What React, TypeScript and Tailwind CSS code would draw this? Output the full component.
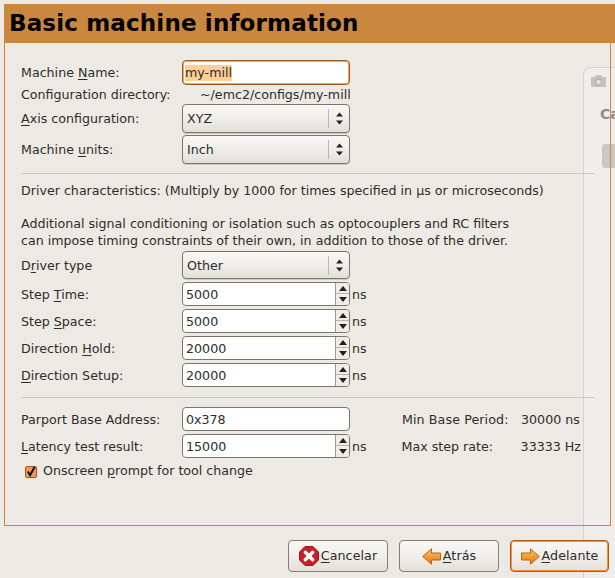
const Mn = ({ children }: { children: string }) => <span className="underline underline-offset-2">{children}</span>;

function UpDown() {
  return (
    <svg width="9" height="15" viewBox="0 0 9 15" className="text-[#222]">
      <path d="M4.5 1.5 L8 5.5 L1 5.5 Z M1 9.5 L8 9.5 L4.5 13.5 Z" fill="currentColor" />
    </svg>
  );
}

function Combo({ value, h = "h-[29px]" }: { value: string; h?: string }) {
  return (
    <div className={`${h} w-[168px] flex items-center rounded-[4px] border border-[#7c7568] bg-gradient-to-b from-[#f8f7f5] via-[#f0eeea] to-[#e3dfd9] shadow-[0_1px_0_#cfcac2]`}>
      <span className="flex-1 pl-[4px] pt-[2px] leading-none">{value}</span>
      <span className="h-[19px] w-px bg-[#bdb8ae]" />
      <span className="w-[20px] flex justify-center"><UpDown /></span>
    </div>
  );
}

function Spin({ value }: { value: string }) {
  return (
    <div className="flex items-center">
      <div className="h-[24px] w-[168px] flex rounded-[4px] border border-[#7c7568] bg-white overflow-hidden">
        <span className="flex-1 pl-[3px] leading-[23px]">{value}</span>
        <div className="w-[14px] flex flex-col border-l border-[#a09a8e] bg-[#efedea]">
          <span className="h-1/2 flex items-center justify-center border-b border-[#b8b3a9]">
            <svg width="8" height="5" viewBox="0 0 8 5"><path d="M4 0 L8 5 L0 5 Z" fill="#222" /></svg>
          </span>
          <span className="h-1/2 flex items-center justify-center">
            <svg width="8" height="5" viewBox="0 0 8 5"><path d="M0 0 L8 0 L4 5 Z" fill="#222" /></svg>
          </span>
        </div>
      </div>
      <span className="ml-[2px] pt-[2px]">ns</span>
    </div>
  );
}

function Row({ label, className = "", children }: { label: React.ReactNode; className?: string; children: React.ReactNode }) {
  return (
    <div className={`flex items-center ${className}`}>
      <span className="w-[161px] shrink-0 pt-[2px]">{label}</span>
      {children}
    </div>
  );
}

function Arrow({ flip }: { flip?: boolean }) {
  return (
    <svg width="19" height="17" viewBox="0 0 19 17" className={flip ? "-scale-x-100" : ""}>
      <defs>
        <linearGradient id={flip ? "arrowA" : "arrowB"} x1="0" y1="0" x2="0" y2="1">
          <stop offset="0" stopColor="#fcc26e" />
          <stop offset="1" stopColor="#e8780c" />
        </linearGradient>
      </defs>
      <path d="M0.5 5 H9.5 V0.8 L18.3 8.5 L9.5 16.2 V12 H0.5 Z" fill={`url(#${flip ? "arrowA" : "arrowB"})`} stroke="#b86510" />
    </svg>
  );
}

function CancelIcon() {
  return (
    <svg width="20" height="20" viewBox="0 0 20 20">
      <path d="M6 0.5 H14 L19.5 6 V14 L14 19.5 H6 L0.5 14 V6 Z" fill="#c8202a" stroke="#a3141c" />
      <path d="M6.3 6.3 L13.7 13.7 M13.7 6.3 L6.3 13.7" stroke="#fff" strokeWidth="3.4" strokeLinecap="round" />
    </svg>
  );
}

function Btn({ icon, focused, children, width }: { icon: React.ReactNode; focused?: boolean; children: React.ReactNode; width: string }) {
  return (
    <button className={`${width} h-[32px] flex items-center justify-center gap-[2px] rounded-[4px] border bg-gradient-to-b from-[#f8f7f5] via-[#f1efeb] to-[#e3dfd9] tracking-[0.08px] ${focused ? "border-[#b8550f] shadow-[inset_0_0_0_1px_#f5913c]" : "border-[#857e71]"}`}>
      {icon}
      <span>{children}</span>
    </button>
  );
}

export default function App() {
  return (
    <div className="relative w-[615px] h-[578px] overflow-hidden bg-[#edeae5] text-[#2d2d2a] text-[12.65px] font-['DejaVu_Sans',sans-serif]">
      {/* ghost of the window behind, showing through */}
      <div className="absolute left-[583px] top-[67px] w-[60px] h-[520px] rounded-tl-[8px] border-l border-t border-[#d5d2cc] bg-[#f0eeea]">
        <svg width="17" height="14" viewBox="0 0 17 14" className="absolute left-[6px] top-[6px]">
          <path d="M1 3 H5 L6 1 H11 L12 3 H16 V13 H1 Z" fill="#c4c2be" />
          <circle cx="8.5" cy="8" r="3" fill="#e2e0dc" stroke="#a9a7a3" />
        </svg>
        <span className="absolute left-[16px] top-[36px] text-[14px] text-[#8d8b87] font-semibold">Ca</span>
        <div className="absolute left-[18px] top-[76px] w-[20px] h-[24px] rounded-[3px] bg-[#cbc8c3]" />
      </div>

      <div className="absolute left-[4px] top-[4px] w-[607px] h-[522px] border-l border-r border-b border-[#c9873f]" />
      <div className="absolute left-[4px] top-[4px] w-[611px] h-[39px] bg-[#c9873f] pl-[5px] pt-[1px] text-[23px] leading-[37px] font-bold text-black tracking-[0.16px] whitespace-nowrap">
        Basic machine information
      </div>

      <div className="absolute left-[21px] top-[60px] w-[573px] whitespace-nowrap">
        <Row label={<>Machine <Mn>N</Mn>ame:</>}>
          <div className="h-[25px] w-[168px] flex items-center rounded-[4px] border border-[#a5561b] bg-white pl-[2px] shadow-[inset_0_0_0_1px_#f0a766]">
            <span className="bg-[#fdcf94] leading-[16px]">my-mill</span>
          </div>
        </Row>
        <Row label="Configuration directory:" className="h-[19px]">
          <span className="ml-[18px] pt-[2px] leading-none">~/emc2/configs/my-mill</span>
        </Row>
        <Row label={<><Mn>A</Mn>xis configuration:</>}><Combo value="XYZ" /></Row>
        <Row label={<>Machine <Mn>u</Mn>nits:</>} className="mt-[2px]"><Combo value="Inch" /></Row>
        <div className="mt-[9px] h-px bg-[#cdc9c2]" />
        <p className="mt-[8px] leading-[17px]">Driver characteristics: (Multiply by 1000 for times specified in µs or microseconds)</p>
        <p className="mt-[16px] leading-[17px]">
          Additional signal conditioning or isolation such as optocouplers and RC filters<br />
          can impose timing constraints of their own, in addition to those of the driver.
        </p>
        <Row label={<>D<Mn>r</Mn>iver type</>} className="mt-[2px]"><Combo value="Other" h="h-[28px]" /></Row>
        <div className="mt-[3px] flex flex-col gap-[3px]">
          <Row label={<>Step <Mn>T</Mn>ime:</>}><Spin value="5000" /></Row>
          <Row label={<>Step <Mn>S</Mn>pace:</>}><Spin value="5000" /></Row>
          <Row label={<>Direction <Mn>H</Mn>old:</>}><Spin value="20000" /></Row>
          <Row label={<><Mn>D</Mn>irection Setup:</>}><Spin value="20000" /></Row>
        </div>
        <div className="mt-[10px] h-px bg-[#cdc9c2]" />
        <Row label="Parport Base Address:" className="mt-[9px]">
          <div className="h-[24px] w-[168px] rounded-[4px] border border-[#7c7568] bg-white pl-[3px] leading-[23px]">0x378</div>
          <span className="ml-[52px] w-[119px] pt-[2px] tracking-[0.1px]">Min Base Period:</span>
          <span className="pt-[2px]">30000 ns</span>
        </Row>
        <Row label={<><Mn>L</Mn>atency test result:</>} className="mt-[3px]">
          <Spin value="15000" />
          <span className="ml-[35px] w-[119px] pt-[2px]">Max step rate:</span>
          <span className="pt-[2px]">33333 Hz</span>
        </Row>
        <div className="mt-[4px] ml-[4px] flex items-center gap-[6px] h-[19px]">
          <span className="w-[12px] h-[12px] flex items-center justify-center rounded-[2px] border border-[#a5561b] bg-[#f2975a]">
            <svg width="11" height="11" viewBox="0 0 11 11"><path d="M2 5.5 L4.5 9.5 L9.5 0.5" fill="none" stroke="#111" strokeWidth="2.2" /></svg>
          </span>
          <span>Onscreen <Mn>p</Mn>rompt for tool change</span>
        </div>
      </div>

      <div className="absolute left-[288px] top-[540px] flex gap-[11px]">
        <Btn width="w-[100px]" icon={<CancelIcon />}><Mn>C</Mn>ancelar</Btn>
        <Btn width="w-[100px]" icon={<Arrow flip />}><Mn>A</Mn>trás</Btn>
        <Btn width="w-[99px]" focused icon={<Arrow />}><Mn>A</Mn>delante</Btn>
      </div>
    </div>
  );
}
